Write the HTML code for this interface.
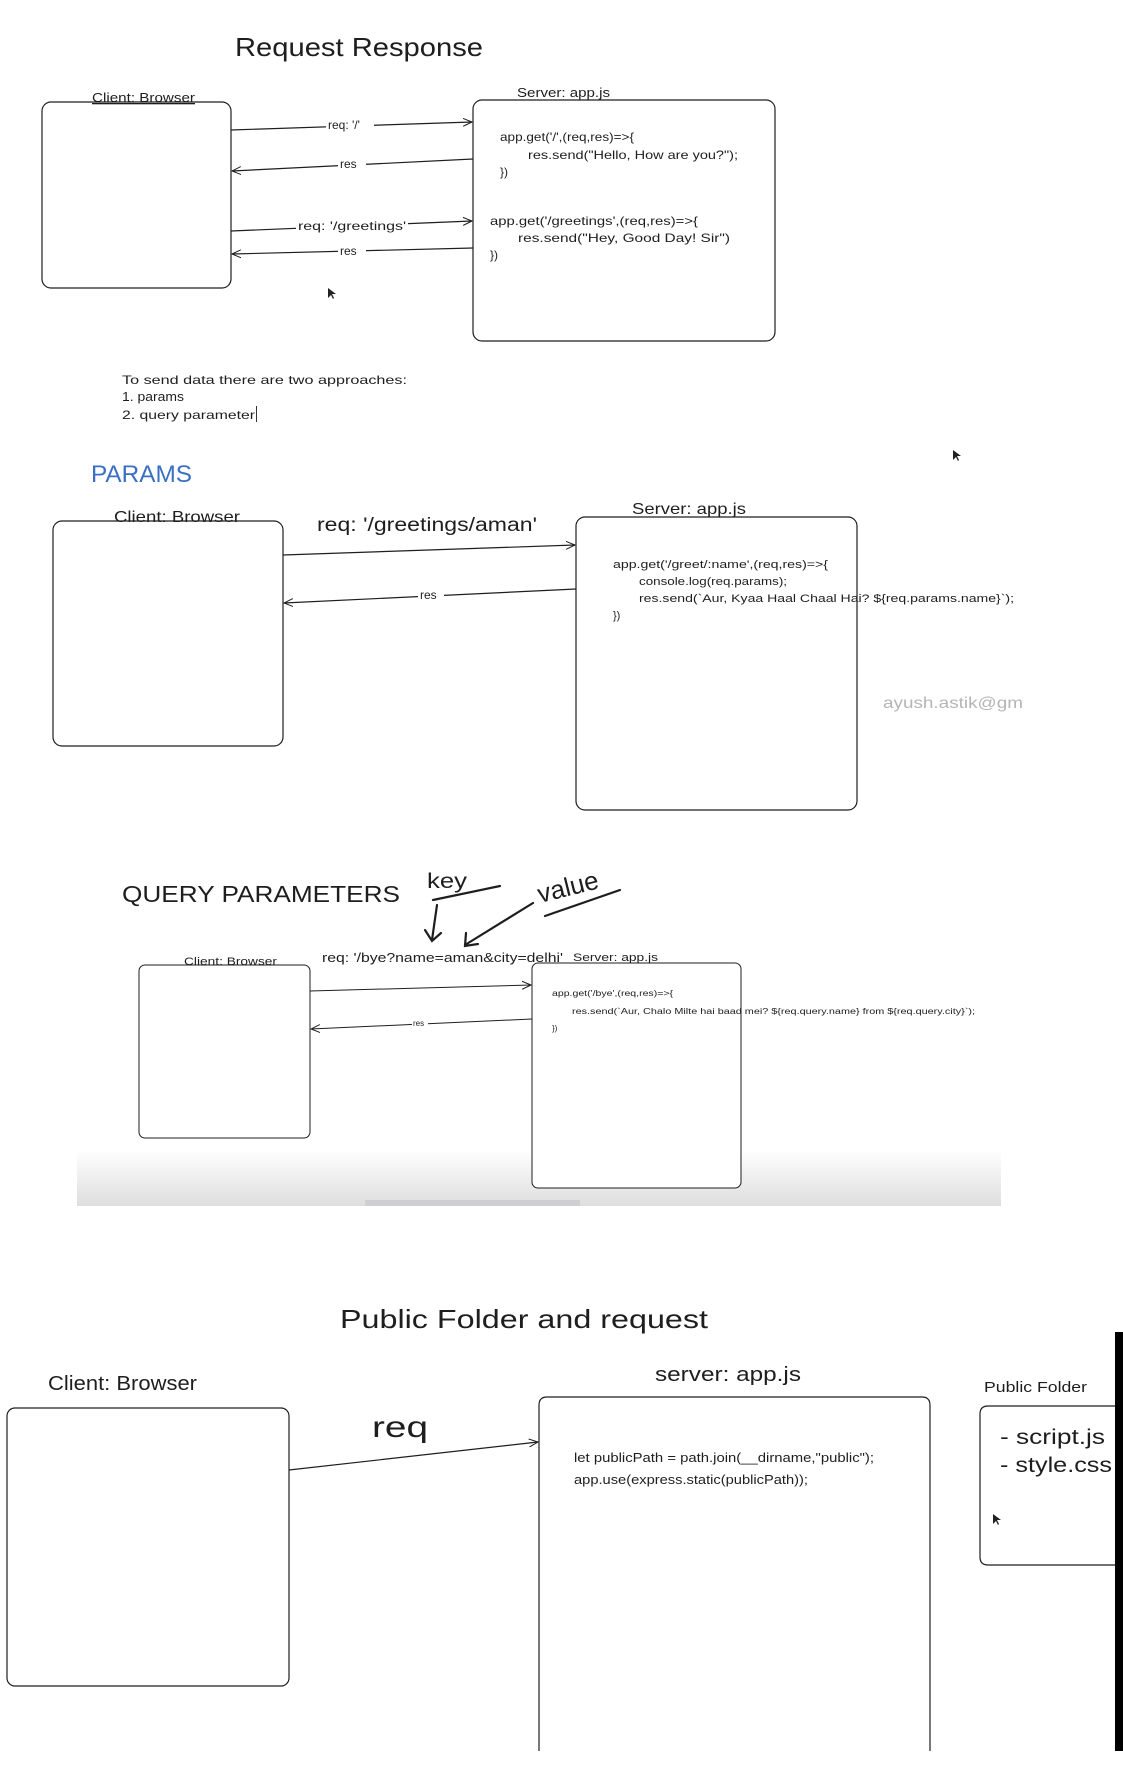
<!DOCTYPE html>
<html><head><meta charset="utf-8"><style>
html,body{margin:0;padding:0;background:#fff;}
svg{display:block}
text{font-family:"Liberation Sans",sans-serif;fill:#1e1e1e}
</style></head><body>
<svg width="1123" height="1783" viewBox="0 0 1123 1783" xmlns="http://www.w3.org/2000/svg">
<defs>
<linearGradient id="g" x1="0" y1="0" x2="0" y2="1">
<stop offset="0" stop-color="#fff"/><stop offset="1" stop-color="#dedede"/>
</linearGradient>
<marker id="a" markerWidth="10" markerHeight="10" refX="9" refY="5" orient="auto" markerUnits="userSpaceOnUse">
<path d="M0,1 L9,5 L0,9" fill="none" stroke="#1e1e1e" stroke-width="1"/>
</marker>
</defs>
<g fill="none" stroke="#1e1e1e" stroke-width="1.2">
<rect x="42" y="102" width="189" height="186" rx="9"/>
<rect x="473" y="100" width="302" height="241" rx="9"/>
<path d="M231,130 L472,122" marker-end="url(#a)"/>
<path d="M473,159 L232,171" marker-end="url(#a)"/>
<path d="M231,231 L472,221" marker-end="url(#a)"/>
<path d="M473,248 L232,254" marker-end="url(#a)"/>
<rect x="53" y="521" width="230" height="225" rx="9"/>
<rect x="576" y="517" width="281" height="293" rx="9"/>
<path d="M283,555 L575,545" marker-end="url(#a)"/>
<path d="M576,589 L284,603" marker-end="url(#a)"/>
</g>
<rect x="77" y="1150" width="924" height="56" fill="url(#g)"/>
<rect x="365" y="1200" width="215" height="6" fill="#cfcfd2"/>
<g fill="none" stroke="#1e1e1e" stroke-width="1">
<rect x="139" y="965" width="171" height="173" rx="6"/>
<rect x="532" y="963" width="209" height="225" rx="6" fill="#fff"/>
<path d="M310,991 L531,985" marker-end="url(#a)"/>
<path d="M532,1019 L311,1029" marker-end="url(#a)"/>
</g>
<g fill="none" stroke="#1e1e1e" stroke-width="2.2" stroke-linecap="round">
<path d="M433,900 L500,886"/>
<path d="M545,916 L620,890"/>
<path d="M437,905 L432,940 M425,930 L432,941 L441,933"/>
<path d="M533,903 L465,945 M466,933 L465,946 L478,944"/>
</g>
<g fill="none" stroke="#1e1e1e" stroke-width="1.2">
<rect x="7" y="1408" width="282" height="278" rx="8"/>
<path d="M539,1751 L539,1405 Q539,1397 547,1397 L922,1397 Q930,1397 930,1405 L930,1751"/>
<path d="M1123,1406 L988,1406 Q980,1406 980,1414 L980,1557 Q980,1565 988,1565 L1123,1565"/>
<path d="M289,1470 L538,1442" marker-end="url(#a)"/>
</g>
<rect x="1115" y="1332" width="8" height="419" fill="#000"/>

<text x="235" y="56" font-size="26" textLength="248" lengthAdjust="spacingAndGlyphs">Request Response</text>
<text x="92" y="102" font-size="13" textLength="103" lengthAdjust="spacingAndGlyphs" text-decoration="underline">Client: Browser</text>
<text x="517" y="97" font-size="13" textLength="93" lengthAdjust="spacingAndGlyphs">Server: app.js</text>
<rect x="326" y="118" width="48" height="12" fill="#fff"/>
<text x="328" y="129" font-size="12">req: '/'</text>
<rect x="338" y="157" width="28" height="12" fill="#fff"/>
<text x="340" y="168" font-size="12">res</text>
<rect x="296" y="218" width="112" height="14" fill="#fff"/>
<text x="298" y="230" font-size="12" textLength="108" lengthAdjust="spacingAndGlyphs">req: '/greetings'</text>
<rect x="338" y="244" width="28" height="12" fill="#fff"/>
<text x="340" y="255" font-size="12">res</text>
<g font-size="12">
<text x="500" y="141" textLength="134" lengthAdjust="spacingAndGlyphs">app.get('/',(req,res)=>{</text>
<text x="528" y="159" textLength="210" lengthAdjust="spacingAndGlyphs">res.send("Hello, How are you?");</text>
<text x="500" y="176">})</text>
<text x="490" y="225" textLength="208" lengthAdjust="spacingAndGlyphs">app.get('/greetings',(req,res)=>{</text>
<text x="518" y="242" textLength="212" lengthAdjust="spacingAndGlyphs">res.send("Hey, Good Day! Sir")</text>
<text x="490" y="259">})</text>
<text x="122" y="384" textLength="285" lengthAdjust="spacingAndGlyphs">To send data there are two approaches:</text>
<text x="122" y="401" font-size="13" textLength="62" lengthAdjust="spacingAndGlyphs">1. params</text>
<text x="122" y="419" textLength="133" lengthAdjust="spacingAndGlyphs">2. query parameter</text>
</g>
<rect x="256" y="406" width="1" height="16" fill="#333"/>
<text x="91" y="482" font-size="24" style="fill:#3a6fc4" textLength="101" lengthAdjust="spacingAndGlyphs">PARAMS</text>
<text x="114" y="522" font-size="16" textLength="126" lengthAdjust="spacingAndGlyphs">Client: Browser</text>
<text x="317" y="531" font-size="19" textLength="220" lengthAdjust="spacingAndGlyphs">req: '/greetings/aman'</text>
<text x="632" y="514" font-size="16" textLength="114" lengthAdjust="spacingAndGlyphs">Server: app.js</text>
<rect x="418" y="588" width="26" height="12" fill="#fff"/>
<text x="420" y="599" font-size="12">res</text>
<g font-size="11">
<text x="613" y="568" textLength="215" lengthAdjust="spacingAndGlyphs">app.get('/greet/:name',(req,res)=>{</text>
<text x="639" y="585" textLength="148" lengthAdjust="spacingAndGlyphs">console.log(req.params);</text>
<text x="639" y="602" textLength="375" lengthAdjust="spacingAndGlyphs">res.send(`Aur, Kyaa Haal Chaal Hai? ${req.params.name}`);</text>
<text x="613" y="619">})</text>
</g>
<text x="883" y="708" font-size="16" style="fill:#b5b5b5" textLength="140" lengthAdjust="spacingAndGlyphs">ayush.astik@gm</text>

<text x="122" y="902" font-size="23" textLength="278" lengthAdjust="spacingAndGlyphs">QUERY PARAMETERS</text>
<text x="427" y="888" font-size="21" textLength="40" lengthAdjust="spacingAndGlyphs">key</text>
<text x="540" y="903" font-size="26" textLength="62" lengthAdjust="spacingAndGlyphs" transform="rotate(-14 540 903)">value</text>
<text x="184" y="965" font-size="11" textLength="93" lengthAdjust="spacingAndGlyphs">Client: Browser</text>
<text x="322" y="962" font-size="13" textLength="241" lengthAdjust="spacingAndGlyphs">req: '/bye?name=aman&amp;city=delhi'</text>
<text x="573" y="961" font-size="11" textLength="85" lengthAdjust="spacingAndGlyphs">Server: app.js</text>
<rect x="412" y="1018" width="16" height="9" fill="#fff"/>
<text x="413" y="1026" font-size="8">res</text>
<g font-size="8">
<text x="552" y="996" textLength="121" lengthAdjust="spacingAndGlyphs">app.get('/bye',(req,res)=>{</text>
<text x="572" y="1014" textLength="403" lengthAdjust="spacingAndGlyphs">res.send(`Aur, Chalo Milte hai baad mei? ${req.query.name} from ${req.query.city}`);</text>
<text x="552" y="1031">})</text>
</g>

<text x="340" y="1328" font-size="26" textLength="368" lengthAdjust="spacingAndGlyphs">Public Folder and request</text>
<text x="48" y="1390" font-size="20" textLength="149" lengthAdjust="spacingAndGlyphs">Client: Browser</text>
<text x="655" y="1381" font-size="20" textLength="146" lengthAdjust="spacingAndGlyphs">server: app.js</text>
<text x="372" y="1437" font-size="30" textLength="56" lengthAdjust="spacingAndGlyphs">req</text>
<text x="574" y="1462" font-size="13" textLength="300" lengthAdjust="spacingAndGlyphs">let publicPath = path.join(__dirname,"public");</text>
<text x="574" y="1484" font-size="13" textLength="234" lengthAdjust="spacingAndGlyphs">app.use(express.static(publicPath));</text>
<text x="984" y="1392" font-size="15" textLength="103" lengthAdjust="spacingAndGlyphs">Public Folder</text>
<text x="1000" y="1444" font-size="21" textLength="105" lengthAdjust="spacingAndGlyphs">- script.js</text>
<text x="1000" y="1472" font-size="21" textLength="112" lengthAdjust="spacingAndGlyphs">- style.css</text>
<path d="M328,288 l0,10 l3,-3 l2,4 l1,-1 l-2,-4 l4,0 z" fill="#222"/>
<path d="M953,450 l0,10 l3,-3 l2,4 l1,-1 l-2,-4 l4,0 z" fill="#222"/>
<path d="M993,1514 l0,10 l3,-3 l2,4 l1,-1 l-2,-4 l4,0 z" fill="#222"/>
</svg>
</body></html>
